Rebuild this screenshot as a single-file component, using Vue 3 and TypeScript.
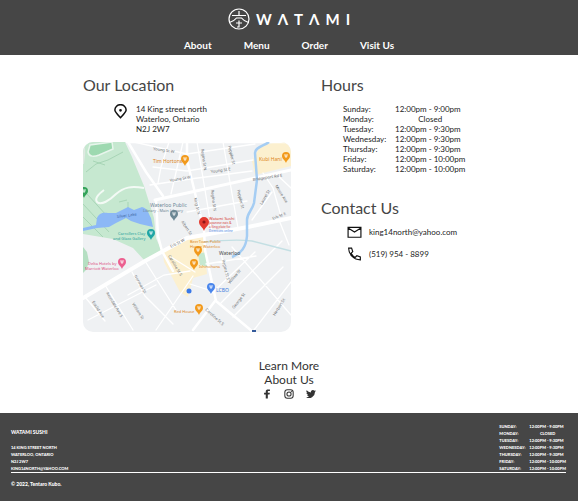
<script setup lang="ts">
interface DayHours {
  day: string
  time: string
}

interface MapLabel {
  text: string
  x: number
  y: number
  rotate?: number
  kind?: string
}

interface MapPin {
  x: number
  y: number
  color: string
}

const links: string[] = ['About', 'Menu', 'Order', 'Visit Us']
const wordmark: string[] = ['W', 'Λ', 'T', 'Λ', 'M', 'I']

const hours: DayHours[] = [
  { day: 'Sunday', time: '12:00pm - 9:00pm' },
  { day: 'Monday', time: 'Closed' },
  { day: 'Tuesday', time: '12:00pm - 9:30pm' },
  { day: 'Wednesday', time: '12:00pm - 9:30pm' },
  { day: 'Thursday', time: '12:00pm - 9:30pm' },
  { day: 'Friday', time: '12:00pm - 10:00pm' },
  { day: 'Saturday', time: '12:00pm - 10:00pm' },
]

const pins: MapPin[] = [
  { x: 102, y: 24, color: '#f29a1c' },
  { x: 203, y: 21, color: '#f29a1c' },
  { x: 1, y: 56, color: '#34a35a' },
  { x: 91, y: 79, color: '#6c8794' },
  { x: 68, y: 98, color: '#1fa5a5' },
  { x: 39, y: 127, color: '#ec6090' },
  { x: 115, y: 115, color: '#f29a1c' },
  { x: 111, y: 128, color: '#f29a1c' },
  { x: 128, y: 152, color: '#4a86ec' },
  { x: 116, y: 173, color: '#f29a1c' },
]

const labels: MapLabel[] = [
  { text: 'Tim Hortons', x: 70, y: 21, kind: 'food' },
  { text: 'Kubi Hani', x: 176, y: 19, kind: 'food' },
  { text: 'Young St W', x: 70, y: 8, rotate: 8 },
  { text: 'Young St W', x: 87, y: 40, rotate: -10 },
  { text: 'Young St E', x: 128, y: 31, rotate: -8 },
  { text: 'Waterloo Public', x: 67, y: 65, kind: 'place' },
  { text: 'Library - Main Library', x: 60, y: 70, kind: 'place small' },
  { text: 'Silver Lake', x: 34, y: 76, rotate: -7, kind: 'lake' },
  { text: 'Carrollers Clay', x: 35, y: 93, kind: 'teal small' },
  { text: 'and Glass Gallery', x: 30, y: 98, kind: 'teal small' },
  { text: 'Delta Hotels by', x: 5, y: 123, kind: 'hotel small' },
  { text: 'Marriott Waterloo', x: 2, y: 128, kind: 'hotel small' },
  { text: 'Bridgeport Rd E', x: 170, y: 39, rotate: -9 },
  { text: 'Erb St W', x: 88, y: 106, rotate: -27 },
  { text: 'Erb St E', x: 190, y: 78, rotate: -22 },
  { text: 'King St N', x: 111, y: 56, rotate: 78 },
  { text: 'Regina St N', x: 118, y: 7, rotate: 82 },
  { text: 'Peppler St', x: 145, y: 4, rotate: 76 },
  { text: 'Regina St N', x: 128, y: 48, rotate: 83 },
  { text: 'Peppler St', x: 154, y: 48, rotate: 76 },
  { text: 'Laurel St', x: 179, y: 63, rotate: -60 },
  { text: 'Moore Ave', x: 192, y: 44, rotate: 58 },
  { text: 'Albert St', x: 98, y: 80, rotate: 56 },
  { text: 'Caroline St S', x: 85, y: 114, rotate: 59 },
  { text: 'Norman St', x: 51, y: 134, rotate: 60 },
  { text: 'Avondale Ave S', x: 23, y: 151, rotate: 59 },
  { text: 'Euclid Ave', x: 9, y: 160, rotate: 58 },
  { text: 'William St', x: 49, y: 162, rotate: 58 },
  { text: 'Regina St S', x: 139, y: 118, rotate: 76 },
  { text: 'Willow St', x: 147, y: 142, rotate: -50 },
  { text: 'George St', x: 151, y: 167, rotate: -52 },
  { text: 'Caroline St S', x: 122, y: 168, rotate: 42 },
  { text: 'Herbert St', x: 192, y: 174, rotate: -58 },
  { text: 'BeerTown Public', x: 107, y: 101, kind: 'food small' },
  { text: 'House Waterloo', x: 107, y: 106, kind: 'food small' },
  { text: 'Ishinohana', x: 116, y: 126, kind: 'food small' },
  { text: 'Waterloo', x: 136, y: 113, kind: 'city' },
  { text: 'LCBO', x: 133, y: 150, kind: 'blue' },
  { text: 'Red House', x: 91, y: 171, kind: 'food small' },
  { text: 'Watami Sushi', x: 126, y: 78, kind: 'red small' },
  { text: 'Japanese eats &', x: 126, y: 82, kind: 'red tiny' },
  { text: 'a King plate for', x: 126, y: 86, kind: 'red tiny' },
  { text: 'Directions online', x: 126, y: 90, kind: 'blue tiny' },
]
</script>

<template>
  <div class="page">
    <header class="top">
      <a class="brand" href="#" aria-label="Watami">
        <svg class="emblem" viewBox="0 0 44 44" fill="none" stroke="#fff" stroke-width="2.4">
          <circle cx="22" cy="22" r="20" />
          <path d="M22 6v9M8 15h28" />
          <path d="M3 29c6-2 11-5 14-9h10c3 4 8 7 14 9" />
          <path d="M16 30h12M22 25v14M18 38h4" />
        </svg>
        <span class="wordmark"><span v-for="(letter, i) in wordmark" :key="i">{{ letter }}</span></span>
      </a>
      <nav class="nav">
        <a v-for="link in links" :key="link" href="#">{{ link }}</a>
      </nav>
    </header>

    <main>
      <div class="columns">
        <section>
          <h2>Our Location</h2>
          <div class="address">
            <svg class="pin" viewBox="0 0 24 24" fill="none" stroke="#111" stroke-width="2.4">
              <path d="M12 22C6.500 16 3 12.500 3 9.500a9 8.500 0 0 1 18 0C21 12.500 17.500 16 12 22z" />
              <circle cx="12" cy="10" r="1" fill="#111" />
            </svg>
            <address>14 King street north<br />Waterloo, Ontario<br />N2J 2W7</address>
          </div>
          <svg class="map" viewBox="0 0 208 190" role="img" aria-label="Map of Waterloo">
            <rect width="208" height="190" fill="#eff1f3" />
            <path d="M0 0h42l7 15 12 29 10 32 2 20 6 14-17 9-12-13-20-9-30-5z" fill="#c6e8d0" />
            <path d="M0 105l4 5 2 10-3 8-3 3z" fill="#b5dfc2" />
            <path d="M7 3l22-3 1 7-14 6c-5 2-10 2-11-3z" fill="#9dd9b0" stroke="#e8f5ec" stroke-width="1.500" />
            <path d="M3 30l10-8 12-4 15-8M10 19l12 4M36 60l8-2M45 60v8M0 62l26 28M4 52l20 22M0 75l20 20" fill="none" stroke="#a0cfae" stroke-width="0.800" />
            <path d="M0 0c3 10 0 18 0 22" fill="none" stroke="#dfe9e2" stroke-width="2" />
            <path d="M21 48c-4 3-10 8-7 12 4 4 13-2 19-8 8-7 15-8 28-6" fill="none" stroke="#f3faf5" stroke-width="2" />
            <path d="M0 86l13-3 1-7c2-5 6-6 11-5h8l12-6 6 3 8-3c6 1 7 8 9 11l2 9-13-3-9-3-5-3-10 5-7 4-12 1-14 3z" fill="#8cb8f6" />
            <path d="M178 3l30-5v26l-36 9-3-14z" fill="#fcf0cf" />
            <path d="M80 109l22-11 18-3 4 37-14 4-5 19-8-5-16-30z" fill="#fcf0cf" />
            <path d="M115 112l8-2 3 15-9-2z" fill="#c6e8d0" />
            <g fill="none" stroke="#fff" stroke-linecap="round">
              <path d="M45 0l18 30 17 24M44 0l160 0" stroke-width="2.500" />
              <path d="M72 58l32-7 104-23" stroke-width="3" />
              <path d="M73 58l2 36 4 15 11 20" stroke-width="2.500" />
              <path d="M0 156l62-37 42-23 61-11 43-9" stroke-width="4" />
              <path d="M104 0v18l17 70 1 20 11 51 37 31M132 159l-22 29" stroke-width="2.500" />
              <path d="M51 0l53 12 68-10M70 25l34 4 66-11M67 43l40-6 62-8M86 0l-8 25-3 16M114 0l15 90M140 0l15 86M100 0l-12 52M104 70l60-11M180 31l10 15 8 28M189 50l-20 28M193 32l15 14M196 78l10 25" stroke-width="1.300" />
              <path d="M2 155l20 24M22 143l28 45M49 130l13 24 28 28M62 119l31 49M45 153l36-20 26-4M5 178l68-35M73 188l37-54M123 122l50-8M138 112l8 29M149 105l59 68M128 152l44-42M137 162l62-63M150 175l50-50M171 188l37-48M107 142l22 7M88 115l24 15" stroke-width="1.300" />
            </g>
            <path d="M121 100c20-2 34-3 48-1l39 10" fill="none" stroke="#c3dfe3" stroke-width="1.300" />
            <path d="M186 0c-5 4-14 5-14 11l2 27-3 23c-2 8-7 10-7 17v16c-1 12-6 17-15 21" fill="none" stroke="#a5cdf3" stroke-width="2.500" />
            <g>
              <g v-for="(p, i) in pins" :key="i" :transform="`translate(${p.x} ${p.y})`">
                <path d="M0 0C-1-3-4-4-4-7a4 4 0 0 1 8 0C4-4 1-3 0 0z" :fill="p.color" />
                <path d="M-1-9v2.500M1-9v2.500M-1-7h2M0-7v2" stroke="#fff" stroke-width="0.800" />
              </g>
            </g>
            <path d="M121 89c-1-4-5-5-5-9a5 5 0 0 1 10 0c0 4-4 5-5 9z" fill="#e33b30" />
            <circle cx="121" cy="80" r="1.600" fill="#8f1616" />
            <circle cx="106" cy="149" r="2.500" fill="#3978e8" />
            <path d="M169 189h4" stroke="#345a9b" stroke-width="2" />
            <text
              v-for="(l, i) in labels"
              :key="'l' + i"
              :class="['label', l.kind]"
              :transform="`translate(${l.x} ${l.y}) rotate(${l.rotate ?? 0})`"
            >{{ l.text }}</text>
          </svg>
        </section>

        <section>
          <h2>Hours</h2>
          <table class="hours">
            <tbody>
              <tr v-for="h in hours" :key="h.day">
                <th scope="row">{{ h.day }}:</th>
                <td :class="{ closed: h.time === 'Closed' }">{{ h.time }}</td>
              </tr>
            </tbody>
          </table>
          <h2 class="contact-title">Contact Us</h2>
          <ul class="contact">
            <li>
              <svg viewBox="0 0 24 24" fill="none" stroke="#111" stroke-width="2">
                <path d="M1 4h22v17H1zM1 5l11 7 11-7" />
              </svg>
              <a href="mailto:king14north@yahoo.com">king14north@yahoo.com</a>
            </li>
            <li>
              <svg viewBox="0 0 24 24" fill="none" stroke="#111" stroke-width="2">
                <path d="M2 2h5l2 6-3 3c2 3 4 5 7 7l3-3 6 2v5C11 22 2 13 2 2z" />
              </svg>
              <a href="tel:5199548899">(519) 954 - 8899</a>
            </li>
          </ul>
        </section>
      </div>

      <section class="more">
        <p>Learn More</p>
        <p>About Us</p>
        <div class="social">
          <a href="#" aria-label="Facebook">
            <svg viewBox="0 0 24 24" fill="#333"><path d="M9 23V13H5V9h4V6c0-4 2-5 6-5h4v4h-3c-2 0-2 1-2 2v2h5l-1 4h-4v10z" /></svg>
          </a>
          <a href="#" aria-label="Instagram">
            <svg viewBox="0 0 24 24" fill="none" stroke="#333" stroke-width="2.500">
              <rect x="2" y="2" width="20" height="20" rx="6" />
              <circle cx="12" cy="12" r="5" />
              <circle cx="18" cy="6" r="0.500" />
            </svg>
          </a>
          <a href="#" aria-label="Twitter">
            <svg viewBox="0 0 24 24" fill="#333"><path d="M24 4.600a10 10 0 0 1-2.800.8 5 5 0 0 0 2.100-2.700 10 10 0 0 1-3.100 1.200 4.900 4.900 0 0 0-8.400 4.500A14 14 0 0 1 1.700 3.200a4.900 4.900 0 0 0 1.500 6.500 5 5 0 0 1-2.200-.6 4.900 4.900 0 0 0 3.900 4.900 5 5 0 0 1-2.200.1 4.900 4.900 0 0 0 4.600 3.400A10 10 0 0 1 0 19.500 14 14 0 0 0 21.500 7.100 10 10 0 0 0 24 4.600z" /></svg>
          </a>
        </div>
      </section>
    </main>

    <footer class="bottom">
      <div class="bottom-row">
        <div>
          <h3>Watami Sushi</h3>
          <address>14 King street north<br />Waterloo, Ontario<br />N2J 2W7<br />king14north@yahoo.com</address>
        </div>
        <table class="mini-hours">
          <tbody>
            <tr v-for="h in hours" :key="h.day">
              <th scope="row">{{ h.day }}:</th>
              <td :class="{ closed: h.time === 'Closed' }">{{ h.time }}</td>
            </tr>
          </tbody>
        </table>
      </div>
      <p class="copyright">© 2022, Tentaro Kubo.</p>
    </footer>
  </div>
</template>

<style>
body {
  margin: 0;
  background: #fff;
}
</style>

<style scoped>
.page {
  display: flex;
  flex-direction: column;
  min-height: 100vh;
  font-family: Lato, "Liberation Sans", sans-serif;
  font-size: 8px;
  line-height: 10px;
  color: #222;
}

a {
  color: inherit;
  text-decoration: none;
}

h2,
h3,
p,
ul {
  margin: 0;
  padding: 0;
}

address {
  font-style: normal;
}

svg {
  display: block;
  flex: none;
}

.top {
  display: flex;
  flex-direction: column;
  align-items: center;
  gap: 9px;
  padding: 8px 0 4px;
  background: #464646;
  color: #fff;
}

.brand {
  display: flex;
  align-items: center;
  gap: 6px;
}

.emblem {
  width: 22px;
  height: 22px;
}

.wordmark {
  display: flex;
  gap: 6px;
  font-size: 15px;
  line-height: 16px;
  font-weight: 700;
}

.nav {
  display: flex;
  gap: 32px;
  font-size: 10px;
  line-height: 12px;
  font-weight: 700;
}

main {
  flex: 1;
}

.columns {
  display: grid;
  grid-template-columns: 208fr 174fr;
  gap: 30px;
  max-width: 412px;
  margin: 0 auto;
  padding-top: 20px;
}

h2 {
  margin-bottom: 9px;
  font-size: 16px;
  line-height: 20px;
  font-weight: 400;
  color: #464646;
}

.address {
  display: flex;
  gap: 8px;
  padding-left: 30px;
  margin-bottom: 8px;
}

.pin {
  width: 15px;
  height: 15px;
}

.map {
  width: 100%;
  border-radius: 10px;
}

.label {
  font-family: "Noto Sans", sans-serif;
  font-size: 4px;
  fill: #6a6d70;
}

.food,
.place,
.teal,
.hotel,
.blue,
.red,
.city {
  font-size: 5px;
}

.small {
  font-size: 4px;
}

.tiny {
  font-size: 3px;
}

.food {
  fill: #dd861a;
}

.place {
  fill: #6c8794;
}

.lake {
  fill: #3d66a5;
}

.teal {
  fill: #239c9c;
}

.hotel {
  fill: #dc4d80;
}

.city {
  fill: #4c4c4c;
}

.blue {
  fill: #3c7be0;
}

.red {
  fill: #d43a34;
}

table {
  border-collapse: collapse;
}

th,
td {
  padding: 0;
  font-weight: inherit;
  text-align: left;
  white-space: nowrap;
}

td.closed {
  text-align: center;
}

.hours {
  margin-left: 22px;
}

.hours th {
  width: 52px;
}

.contact-title {
  margin-top: 24px;
  margin-bottom: 7px;
}

.contact {
  display: flex;
  flex-direction: column;
  gap: 8px;
  padding-left: 26px;
  list-style: none;
}

.contact li {
  display: flex;
  align-items: center;
  gap: 7px;
}

.contact svg {
  width: 15px;
  height: 14px;
}

.more {
  display: flex;
  flex-direction: column;
  align-items: center;
  padding-top: 27px;
  padding-bottom: 14px;
  font-size: 12px;
  line-height: 14px;
  color: #333;
}

.social {
  display: flex;
  gap: 12px;
  padding-top: 2px;
}

.social svg {
  width: 10px;
  height: 10px;
}

.bottom {
  padding: 10px 12px 10px 11px;
  background: #464646;
  color: #fff;
  font-size: 4px;
  line-height: 7px;
  font-weight: 900;
}

.bottom-row {
  display: flex;
  justify-content: space-between;
  align-items: flex-end;
  border-bottom: 1px solid #fff;
  text-transform: uppercase;
}

h3 {
  margin-bottom: 8px;
  font-size: 5px;
  line-height: 8px;
  font-weight: 900;
}

.mini-hours th {
  width: 30px;
}

.copyright {
  padding: 8px 0 6px;
  font-size: 5px;
}
</style>
